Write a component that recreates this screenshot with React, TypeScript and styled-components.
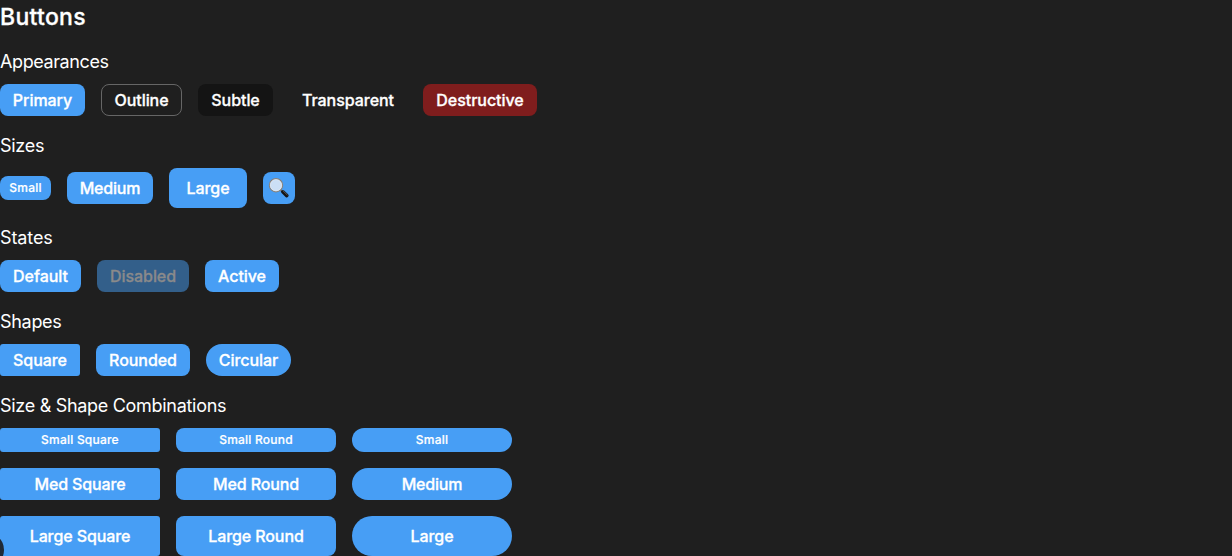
import React from "react";
import styled, { createGlobalStyle } from "styled-components";

type Appearance = "primary" | "outline" | "subtle" | "transparent" | "destructive";
type Size = "small" | "medium" | "large";
type Shape = "square" | "rounded" | "circular";

const backgrounds: Record<Appearance, string> = {
  primary: "#479ef5",
  outline: "transparent",
  subtle: "#141414",
  transparent: "transparent",
  destructive: "#7f1d1d",
};
const radii: Record<Shape, string> = { square: "3px", rounded: "8px", circular: "999px" };
const heights: Record<Size, string> = { small: "24px", medium: "32px", large: "40px" };

const GlobalStyle = createGlobalStyle`
  html, body { margin: 0; height: 100%; overflow: hidden; background: #1f1f1f; }
  body { color: #fff; font-family: Inter, "Liberation Sans", sans-serif; }
`;

const Page = styled.main`
  position: relative;
  display: flex;
  flex-direction: column;
  gap: 16px;
  height: 556px;
  overflow: hidden;
`;

const Title = styled.h2`
  margin: 0;
  font-size: 23px;
  font-weight: 500;
  line-height: 34px;
  height: 32px;
  letter-spacing: 0.3px;
  -webkit-text-stroke: 0.3px currentColor;
`;

const Section = styled.section`
  display: flex;
  flex-direction: column;
  gap: 8px;
`;

const SectionTitle = styled.h3<{ $tracking?: number }>`
  margin: 0;
  font-size: 18px;
  font-weight: 400;
  line-height: 28px;
  letter-spacing: ${(p) => p.$tracking ?? -0.3}px;
`;

const Row = styled.div`
  display: flex;
  align-items: center;
  gap: 16px;
`;

const Grid = styled.div`
  display: grid;
  grid-template-columns: repeat(3, 160px);
  gap: 16px;
`;

const Button = styled.button<{
  $appearance?: Appearance;
  $size?: Size;
  $shape?: Shape;
  $width?: number;
  $tracking?: number;
}>`
  display: inline-flex;
  align-items: center;
  justify-content: center;
  box-sizing: border-box;
  width: ${(p) => (p.$width ? `${p.$width}px` : "100%")};
  height: ${(p) => heights[p.$size ?? "medium"]};
  padding: 0;
  border: 1px solid ${(p) => (p.$appearance === "outline" ? "#666" : "transparent")};
  border-radius: ${(p) => radii[p.$shape ?? "rounded"]};
  background: ${(p) => backgrounds[p.$appearance ?? "primary"]};
  color: #fff;
  font-family: inherit;
  font-size: ${(p) => (p.$size === "small" ? 12 : 16)}px;
  font-weight: 500;
  line-height: 22px;
  letter-spacing: ${(p) => p.$tracking ?? (p.$size === "small" ? 0.22 : -0.05)}px;
  -webkit-text-stroke: ${(p) => (p.$size === "small" ? 0.2 : 0.3)}px currentColor;
  white-space: nowrap;

  &:disabled {
    background: #335f8a;
    color: #8a8a8a;
  }
`;

const Glass = styled.svg`
  display: block;
  width: 22px;
  height: 22px;
`;

const CornerBadge = styled.div`
  position: absolute;
  left: -32px;
  bottom: -12px;
  width: 36px;
  height: 36px;
  border-radius: 50%;
  background: #1f2937;
`;

const MagnifierIcon = () => (
  <Glass viewBox="0 0 22 22" aria-hidden="true">
    <path d="M12 12.2 14 14.2" stroke="#777" strokeWidth="2" />
    <path d="m14.8 14.8 4 3.8" stroke="#151515" strokeWidth="3.6" strokeLinecap="round" />
    <path d="m15 13.8 4.2 4" stroke="#777" strokeWidth=".7" strokeLinecap="round" />
    <circle cx="8" cy="8.2" r="6.6" fill="#cbdff5" stroke="#85817e" strokeWidth="1.2" />
    <circle cx="8" cy="8.2" r="5.7" fill="none" stroke="#e9edf0" strokeWidth=".6" />
  </Glass>
);

export default function App() {
  return (
    <>
      <GlobalStyle />
      <Page>
        <Title>Buttons</Title>
        <Section>
          <SectionTitle $tracking={-0.4}>Appearances</SectionTitle>
          <Row>
            <Button $width={85}>Primary</Button>
            <Button $width={81} $appearance="outline">Outline</Button>
            <Button $width={75} $appearance="subtle">Subtle</Button>
            <Button $width={118} $appearance="transparent">Transparent</Button>
            <Button $width={114} $appearance="destructive">Destructive</Button>
          </Row>
        </Section>
        <Section>
          <SectionTitle>Sizes</SectionTitle>
          <Row>
            <Button $width={51} $size="small">Small</Button>
            <Button $width={86} $tracking={-0.2}>Medium</Button>
            <Button $width={78} $size="large">Large</Button>
            <Button $width={32} aria-label="Search"><MagnifierIcon /></Button>
          </Row>
        </Section>
        <Section>
          <SectionTitle $tracking={-0.1}>States</SectionTitle>
          <Row>
            <Button $width={81}>Default</Button>
            <Button $width={92} disabled>Disabled</Button>
            <Button $width={74}>Active</Button>
          </Row>
        </Section>
        <Section>
          <SectionTitle>Shapes</SectionTitle>
          <Row>
            <Button $width={80} $shape="square">Square</Button>
            <Button $width={94}>Rounded</Button>
            <Button $width={85} $shape="circular">Circular</Button>
          </Row>
        </Section>
        <Section>
          <SectionTitle>Size &amp; Shape Combinations</SectionTitle>
          <Grid>
            <Button $size="small" $shape="square">Small Square</Button>
            <Button $size="small">Small Round</Button>
            <Button $size="small" $shape="circular">Small</Button>
            <Button $shape="square" $tracking={-0.15}>Med Square</Button>
            <Button $tracking={-0.15}>Med Round</Button>
            <Button $shape="circular" $tracking={-0.2}>Medium</Button>
            <Button $size="large" $shape="square" $tracking={-0.1}>Large Square</Button>
            <Button $size="large" $tracking={-0.1}>Large Round</Button>
            <Button $size="large" $shape="circular">Large</Button>
          </Grid>
        </Section>
        <CornerBadge />
      </Page>
    </>
  );
}
